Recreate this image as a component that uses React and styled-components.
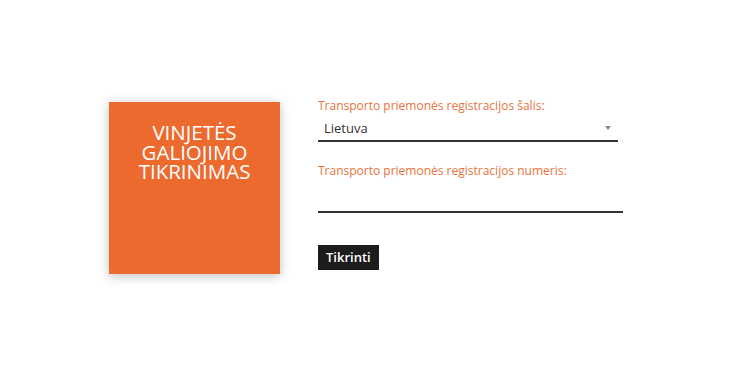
import styled, { createGlobalStyle } from 'styled-components';

const GlobalStyle = createGlobalStyle`
  body {
    margin: 0;
    background: #fff;
    font-family: 'Open Sans', 'Liberation Sans', sans-serif;
  }
`;

const Page = styled.div`
  display: flex;
  align-items: flex-start;
  gap: 38px;
  padding: 102px 0 0 109px;
  height: 375px;
  box-sizing: border-box;
`;

const Tile = styled.div`
  width: 171px;
  height: 172px;
  background: #ed6a2f;
  box-shadow: 0 2px 10px rgba(0, 0, 0, 0.25);
  color: #fff;
  text-align: center;
  box-sizing: border-box;
  padding-top: 21px;
  font-size: 20.5px;
  line-height: 19.5px;
  text-transform: uppercase;
`;

const Form = styled.form`
  display: flex;
  flex-direction: column;
  width: 305px;
  margin-top: -4px;
`;

const Label = styled.label`
  display: block;
  color: #e8733c;
  font-size: 12px;
  line-height: 16px;
  margin-top: ${(p) => p.$top || 0}px;
`;

const SelectBox = styled.div`
  display: flex;
  align-items: center;
  justify-content: space-between;
  width: 300px;
  height: 26px;
  padding: 0 7px 0 6px;
  box-sizing: border-box;
  border-bottom: 2px solid #333;
  font-size: 13px;
  color: #333;
  margin-top: 2px;
`;

const Arrow = styled.span`
  width: 0;
  height: 0;
  border-left: 3.5px solid transparent;
  border-right: 3.5px solid transparent;
  border-top: 4px solid #888;
`;

const TextInput = styled.input`
  width: 305px;
  height: 32px;
  box-sizing: border-box;
  border: none;
  border-bottom: 2px solid #333;
  outline: none;
  font-family: inherit;
  font-size: 13px;
  padding: 0 6px;
  margin-top: 2px;
`;

const Button = styled.button`
  align-self: flex-start;
  margin-top: 32px;
  height: 25px;
  padding: 0 8px;
  background: #1c1c1c;
  color: #fff;
  border: none;
  font-family: inherit;
  font-size: 13px;
  font-weight: 600;
  line-height: 25px;
`;

const App = () => {
  return (
    <>
      <GlobalStyle />
      <Page>
        <Tile>
          Vinjetės
          <br />
          galiojimo
          <br />
          tikrinimas
        </Tile>
        <Form onSubmit={(e) => e.preventDefault()}>
          <Label>Transporto priemonės registracijos šalis:</Label>
          <SelectBox>
            <span>Lietuva</span>
            <Arrow />
          </SelectBox>
          <Label $top={21}>Transporto priemonės registracijos numeris:</Label>
          <TextInput type="text" />
          <Button type="submit">Tikrinti</Button>
        </Form>
      </Page>
    </>
  );
};

export default App;
